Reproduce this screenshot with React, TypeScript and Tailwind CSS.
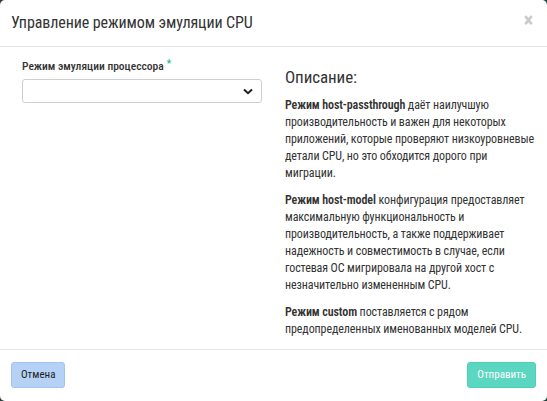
import React from "react";

export default function App() {
	return (
		<div className="w-[547px] h-[401px] bg-[#26403c] font-['Roboto_Condensed','Liberation_Sans_Narrow',sans-serif]">
			<div className="w-full h-full bg-white rounded-[5px] flex flex-col text-[#333] overflow-hidden">
				{/* шапка */}
				<div className="h-[47px] shrink-0 flex items-center justify-between pl-[11px] pr-[14px] border-b border-[#e5e5e5]">
					<h4 className="text-[16px] font-normal tracking-[-0.1px] text-[#333]">Управление режимом эмуляции CPU</h4>
					<button className="text-[#c8c8c8] text-[20px] font-bold leading-none -mt-[6px]">×</button>
				</div>

				{/* тело */}
				<div className="flex-1 flex pl-[22px] pr-[8px] pt-[11px]">
					<div className="w-[240px] shrink-0">
						<label className="block text-[11.5px] font-medium leading-[17px] mb-[4px]">
							Режим эмуляции процессора
							<span className="text-[#2bb598] text-[10px] align-top ml-[3px] relative -top-[3px]">*</span>
						</label>
						<div className="h-[24px] border border-[#cfcfcf] rounded-[3px] flex items-center justify-end pr-[8px]">
							<svg width="10" height="7" viewBox="0 0 10 7">
								<path d="M1 1.5 L5 5.2 L9 1.5" fill="none" stroke="#222" strokeWidth="2" />
							</svg>
						</div>
					</div>
					<div className="ml-[23px] flex-1 text-[12px] leading-[17px] tracking-[-0.1px]">
						<h3 className="text-[17px] font-normal leading-[20px] mt-[9px] mb-[10px]">Описание:</h3>
						<p className="mb-[10px]">
							<b className="font-semibold">Режим host-passthrough</b> даёт наилучшую производительность и важен для
							некоторых приложений, которые проверяют низкоуровневые детали CPU, но это обходится дорого при миграции.
						</p>
						<p className="mb-[10px]">
							<b className="font-semibold">Режим host-model</b> конфигурация предоставляет максимальную функциональность и
							производительность, а также поддерживает надежность и совместимость в случае, если гостевая ОС мигрировала на
							другой хост с незначительно измененным CPU.
						</p>
						<p>
							<b className="font-semibold">Режим custom</b> поставляется с рядом предопределенных именованных моделей CPU.
						</p>
					</div>
				</div>

				{/* подвал */}
				<div className="h-[52px] shrink-0 border-t border-[#e5e5e5] flex items-start justify-between px-[11px] pt-[12px]">
					<button className="h-[26px] px-[9px] rounded-[3px] bg-[#b5d1f6] border border-[#a3c4f2] text-[11px] text-[#222]">
						Отмена
					</button>
					<button className="h-[26px] px-[9px] rounded-[3px] bg-[#5bd6c0] border border-[#50cfb8] text-[11px] text-white">
						Отправить
					</button>
				</div>
			</div>
		</div>
	);
}
